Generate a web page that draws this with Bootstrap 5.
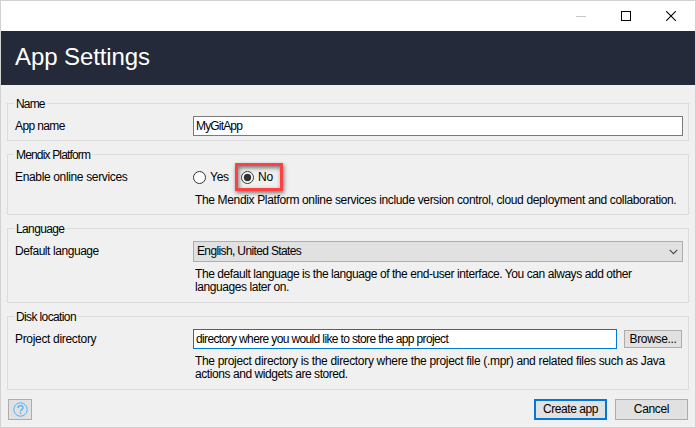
<!DOCTYPE html>
<html lang="en">
<head>
<meta charset="utf-8">
<meta name="viewport" content="width=device-width, initial-scale=1">
<title>App Settings</title>
<link rel="stylesheet" href="https://cdn.jsdelivr.net/npm/bootstrap@5.3.0/dist/css/bootstrap.min.css">
<style>
  body { font: 12px/13px "Liberation Sans", Arial, sans-serif; letter-spacing: -.26px; color: #000; background: #f0f0f0; }
  .window { height: 428px; border: 1px solid #d2d2d2; overflow: hidden; white-space: nowrap; }
  .titlebar { height: 30px; background: #fff; padding-right: 19px; gap: 35px; }
  .banner { height: 54px; background: #242a39; color: #fff; font-size: 24px; line-height: 28px; letter-spacing: -.1px; padding: 0 0 2px 14px; }
  .groups { padding: 18px 6px 0; gap: 13px; }
  .group { border: 1px solid #dcdcdc; padding-left: 7px; padding-right: 5px; position: relative; }
  .group-title { position: absolute; left: 6px; top: -6px; padding: 0 2px; background: #f0f0f0; }
  .g-name { height: 38px; padding-top: 12px; }
  .g-platform { height: 61px; padding-top: 8px; }
  .g-lang { height: 75px; padding-top: 12px; }
  .g-disk { height: 74px; padding-top: 12px; }
  .caption { width: 178px; flex: none; }
  .field { height: 20px; border: 1px solid #7a7a7a; background: #fff; padding: 0 2px; }
  .field.active { border-color: #0078d7; }
  .combo { height: 21px; border: 1px solid #adadad; background: #e1e1e1; padding: 0 4px 0 3px; }
  .hint { margin: 0 0 0 180px; padding-top: 6px; }
  .g-platform .hint { padding-top: 3px; }
  .push { height: 21px; border: 1px solid #adadad; border-radius: 0; background: #e1e1e1; color: #000; font-size: 12px; line-height: 13px; padding: 0; }
  .push.main { border: 2px solid #0078d7; }
  .w-push { width: 73px; }
  .browse { width: 58px; height: 18px; margin: 0 1px 0 7px; }
  .help { width: 24px; }
  .radio-dot { width: 13px; height: 13px; flex: none; }
  .callout-box { width: 48px; height: 28px; margin-left: 7px; padding-left: 3px; border: 3px solid #fb4142; box-shadow: 1px 2px 4px rgba(0,0,0,.5), inset 1px 2px 4px rgba(0,0,0,.5); }
  .yes-text { width: 18px; }
  .footer-bar { padding: 9px 7px 0; }
  .t0 { letter-spacing: -.32px; } .t1 { letter-spacing: -.35px; } .t2 { letter-spacing: -.43px; } .t3 { letter-spacing: -.62px; }
  .t4 { letter-spacing: -.63px; } .t5 { letter-spacing: -.84px; }
</style>
<script src="https://cdn.jsdelivr.net/npm/bootstrap@5.3.0/dist/js/bootstrap.bundle.min.js"></script>
</head>
<body>
<div class="window">
  <div class="titlebar d-flex align-items-center justify-content-end">
    <svg width="10" height="10" shape-rendering="crispEdges"><path d="M0 5.5h10" stroke="#c6c6c6"/></svg>
    <svg width="10" height="10" shape-rendering="crispEdges"><path d="M.5 .5h9v9h-9z" fill="none" stroke="#000"/></svg>
    <svg width="10" height="10"><path d="M.2 .2l9.6 9.6M9.8 .2L.2 9.8" stroke="#000" stroke-width="1.1"/></svg>
  </div>
  <header class="banner d-flex align-items-center">App Settings</header>
  <main class="groups d-flex flex-column">
    <section class="group g-name">
      <span class="group-title t5">Name</span>
      <div class="d-flex align-items-center">
        <span class="caption t3">App name</span>
        <div class="field flex-grow-1 d-flex align-items-center"><span class="t5">MyGitApp</span></div>
      </div>
    </section>
    <section class="group g-platform">
      <span class="group-title t5">Mendix Platform</span>
      <div class="d-flex align-items-center">
        <span class="caption t1">Enable online services</span>
        <svg class="radio-dot" viewBox="0 0 13 13"><circle cx="6.5" cy="6.5" r="6" fill="#fff" stroke="#333"/></svg>
        <span class="ms-1 yes-text">Yes</span>
        <div class="callout-box d-flex align-items-center">
          <svg class="radio-dot" viewBox="0 0 13 13"><circle cx="6.5" cy="6.5" r="6" fill="#fff" stroke="#333"/><circle cx="6.5" cy="6.5" r="3.7" fill="#333"/></svg>
          <span class="ms-1">No</span>
        </div>
      </div>
      <p class="hint t1">The Mendix Platform online services include version control, cloud deployment and collaboration.</p>
    </section>
    <section class="group g-lang">
      <span class="group-title t4">Language</span>
      <div class="d-flex align-items-center">
        <span class="caption t2">Default language</span>
        <div class="combo flex-grow-1 d-flex align-items-center justify-content-between">
          <span class="t4">English, United States</span>
          <svg width="9" height="6"><path d="M.7 .8l3.8 3.8L8.3 .8" fill="none" stroke="#444" stroke-width="1.1"/></svg>
        </div>
      </div>
      <p class="hint t2">The default language is the language of the end-user interface. You can always add other<br>languages later on.</p>
    </section>
    <section class="group g-disk">
      <span class="group-title t3">Disk location</span>
      <div class="d-flex align-items-center">
        <span class="caption t0">Project directory</span>
        <div class="field active flex-grow-1 d-flex align-items-center"><span class="t4">directory where you would like to store the app project</span></div>
        <button class="btn push browse t1">Browse...</button>
      </div>
      <p class="hint t0">The project directory is the directory where the project file (.mpr) and related files such as Java<br><span class="t2">actions and widgets are stored.</span></p>
    </section>
  </main>
  <footer class="footer-bar d-flex">
    <button class="btn push help me-auto d-flex align-items-center justify-content-center" aria-label="Help">
      <svg width="15" height="15" viewBox="0 0 15 15" fill="none" stroke="#55b2ee"><circle cx="7.5" cy="7.5" r="6.7"/><path d="M5 5.9C5 2.8 10 2.9 10 5.6 10 7.4 7.5 7.5 7.5 9.4M7.5 10.6v1.4" stroke-width="1.4"/></svg>
    </button>
    <button class="btn push main w-push t2 me-2">Create app</button>
    <button class="btn push w-push t1">Cancel</button>
  </footer>
</div>
</body>
</html>
